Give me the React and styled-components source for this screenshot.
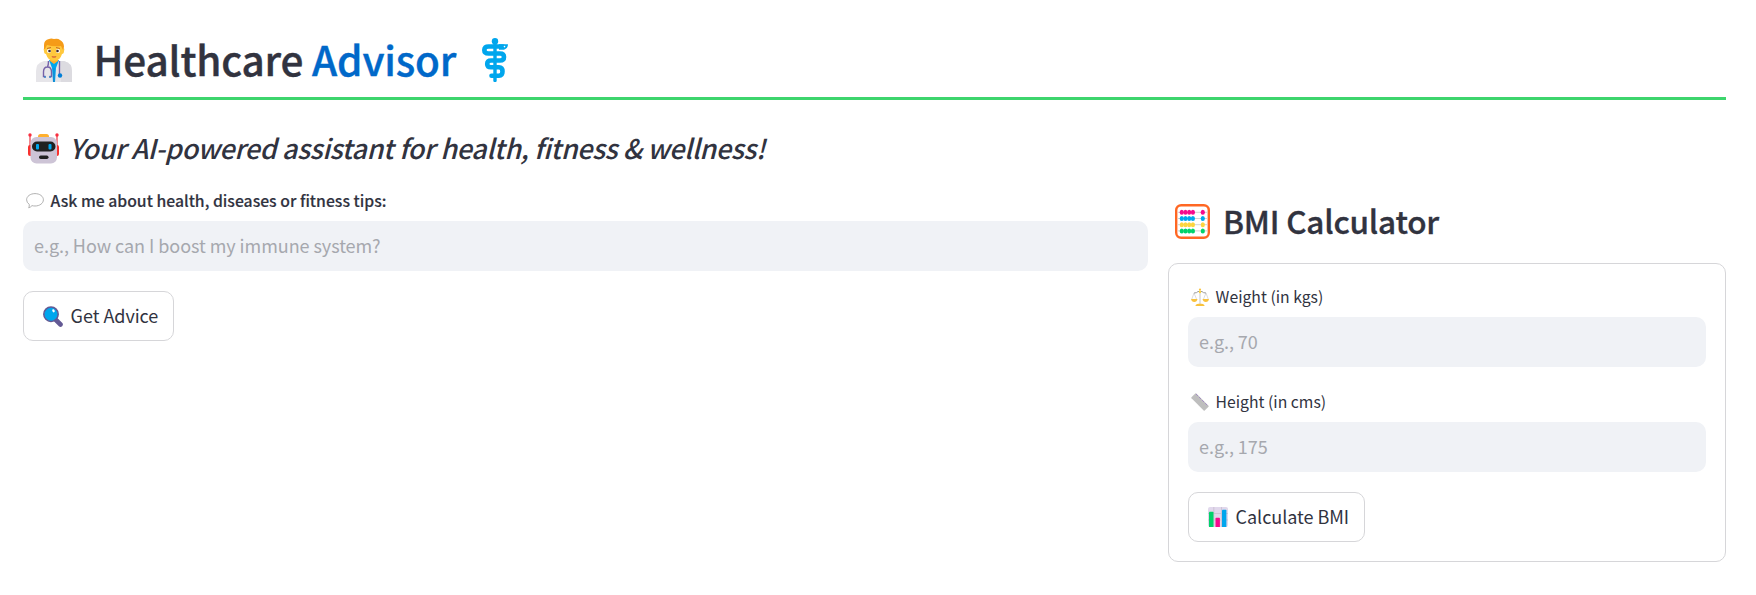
import React from "react";
import styled, { createGlobalStyle } from "styled-components";

const Global = createGlobalStyle`
  * { box-sizing: border-box; }
  body {
    margin: 0;
    background: #fff;
    color: #31333f;
    font-family: "Noto Sans CJK SC", "Noto Sans", sans-serif;
  }
  h1, h2, h4 { margin: 0; font-weight: 500; white-space: nowrap; }
  svg { display: block; flex: none; }
`;

const Page = styled.main`
  padding: 0 30px 33px 23px;
`;

const Header = styled.header`
  display: flex;
  align-items: center;
  height: 100px;
  padding: 33px 0 10px 13px;
  border-bottom: 3px solid #3dd56d;
`;

const Title = styled.h1`
  && { margin: 0 26px 2px 21.5px; }
  font-size: 40.5px;
  line-height: 54px;
  letter-spacing: -0.2px;
  -webkit-text-stroke: 0.4px currentColor;
`;

const Accent = styled.span`
  color: #0068c9;
`;

const Tagline = styled.div`
  display: flex;
  align-items: center;
  gap: 10px;
  height: 36px;
  margin-top: 30px;
  padding-left: 5px;
`;

const TaglineText = styled.h4`
  font-size: 27px;
  line-height: 36px;
  font-style: italic;
  letter-spacing: -0.375px;
`;

const Columns = styled.div`
  display: grid;
  grid-template-columns: 1125px 558px;
  gap: 20px;
  margin-top: 23px;
`;

const Column = styled.section`
  padding-top: ${(p) => p.$top || 0}px;
`;

const Field = styled.label`
  display: block;
  margin-bottom: 20px;
`;

const Label = styled.span`
  display: flex;
  align-items: center;
  gap: 6.6px;
  height: 24px;
  margin-bottom: 8px;
  padding-left: 3px;
  font-size: 15.75px;
  line-height: 24px;
  font-weight: ${(p) => (p.$strong ? 500 : 400)};
  -webkit-text-stroke: ${(p) => (p.$strong ? "0.15px" : "0")} currentColor;
`;

const Input = styled.input`
  display: block;
  width: 100%;
  height: 50px;
  padding: 0 11px 3px;
  border: 0;
  border-radius: 10px;
  background: #f0f2f6;
  color: inherit;
  font: 18px "Noto Sans CJK SC", "Noto Sans", sans-serif;
  letter-spacing: -0.05px;
  &::placeholder { color: #a6a8ae; opacity: 1; }
`;

const Button = styled.button`
  display: flex;
  align-items: center;
  gap: 7.6px;
  width: ${(p) => p.$width}px;
  height: 50px;
  padding: 0 0 0 19px;
  border: 1px solid #d6d6d9;
  border-radius: 10px;
  background: #fff;
  color: inherit;
  font: 18px "Noto Sans CJK SC", "Noto Sans", sans-serif;
  letter-spacing: -0.05px;
  white-space: nowrap;
`;

const ButtonText = styled.span`
  padding-bottom: 2px;
`;

const PanelHeading = styled.div`
  display: flex;
  align-items: center;
  gap: 13px;
  height: 42px;
  margin-bottom: 21px;
  padding-left: 7px;
`;

const PanelTitle = styled.h2`
  padding-bottom: 2px;
  font-size: 31.5px;
  line-height: 42px;
  letter-spacing: -0.2px;
  -webkit-text-stroke: 0.35px currentColor;
`;

const Card = styled.form`
  height: 299px;
  padding: 21px 19px 19px;
  border: 1px solid #d6d6d9;
  border-radius: 10px;
  ${Field} + ${Field} { padding-top: 3px; }
`;

const Doctor = () => (
  <svg width="36" height="44" viewBox="0 0 36 44">
    <path d="M0 44v-11q0-8 8-10h20q8 2 8 10v11z" fill="#e6e5e9" />
    <path d="M24 23h4q8 2 8 10v11H25z" fill="#dcdbe0" />
    <path d="M13 22h10l-3 8-1 14h-2l-1-14z" fill="#00a6ed" />
    <path d="M17.500 30h1v14h-1.500z" fill="#1588d0" />
    <path d="M14 18h8v5l-4 3-4-3z" fill="#ffb02e" />
    <path d="M9 10q-2 0-1 3 0 3 2 3 2 7 8 7t8-7q2 0 2-3 1-3-1-3V6H9z" fill="#ffc83d" />
    <path d="M8 11V7q0-5 5-6 2-1 5 0 4-1 6 1 4 2 4 7l-1 3-2-4q-7 1-14-1l-2 4z" fill="#f59b18" />
    <g fill="#fff"><circle cx="13" cy="13" r="2" /><circle cx="22" cy="13" r="2" /></g>
    <g fill="#402a32"><circle cx="13.500" cy="13" r="1.300" /><circle cx="21.500" cy="13" r="1.300" /></g>
    <path d="M11 10.500l4-1M20 9.500l4 1" stroke="#c26b29" />
    <path d="M15.500 18q2.500 1 5 0l-1 1.500h-3z" fill="#c73c35" />
    <path d="M12.500 23q0 4-1 6-4 0-4 5v4.500h2M11.500 29q4 0 4 5v4.500h-2M23.500 23v13" fill="none" stroke="#7562a8" strokeWidth="1.400" />
    <circle cx="24" cy="37.500" r="2.200" fill="#007fd7" />
    <path d="M8 39h2M13 39h2" stroke="#3c83c8" strokeWidth="1.500" />
  </svg>
);

const Medical = () => (
  <svg width="26" height="44" viewBox="0 0 26 44" fill="none" stroke="#00a6ed">
    <circle cx="13" cy="3.300" r="3.200" fill="#00a6ed" stroke="none" />
    <path d="M13 4v38.500" strokeWidth="3.400" strokeLinecap="round" />
    <path d="M21 8.500H6.500q-4.200 0-4.200 3.500t4.200 3.500h11.500q4 0 4 3.500T18 22.500H9q-3.800 0-3.800 3.400t3.800 3.400h8q3.500 0 3.500 4.200t-3.500 4.200H9.500" strokeWidth="4.600" strokeLinecap="round" strokeLinejoin="round" />
    <path d="M17 6.200h9q0 4-4 5.500h-5z" fill="#00a6ed" stroke="none" />
    <circle cx="22.500" cy="8.600" r=".8" fill="#fff" stroke="none" />
  </svg>
);

const Robot = () => (
  <svg width="31" height="31" viewBox="0 0 31 31">
    <path d="M2 3v12M29 3v12" stroke="#e43c48" strokeWidth="1.200" />
    <circle cx="2" cy="2" r="1.700" fill="#f92f40" /><circle cx="29" cy="2" r="1.700" fill="#f92f40" />
    <rect y="12" width="5" height="11" rx="2" fill="#f8312f" /><rect x="26" y="12" width="5" height="11" rx="2" fill="#f8312f" />
    <rect x="10" y="1" width="11" height="6" rx="2.500" fill="#ffb02e" />
    <rect x="2.500" y="4" width="26.500" height="26.500" rx="6" fill="#cdc4d6" />
    <rect x="4" y="8.500" width="23.500" height="10" rx="5" fill="#212121" />
    <rect x="8" y="11" width="3" height="5.500" rx="1" fill="#00a6ed" /><rect x="20.500" y="11" width="3" height="5.500" rx="1" fill="#00a6ed" />
    <rect x="11" y="22.500" width="9.500" height="3.500" rx="1.700" fill="#212121" />
  </svg>
);

const Bubble = () => (
  <svg width="18" height="16" viewBox="0 0 18 16">
    <path d="M9 .6c4.700 0 8.400 2.700 8.400 6.200S13.700 13 9 13q-1.600 0-3-.4-1.300 1.600-3.300 2.200.9-1.600.5-3.500Q.6 9.500.6 6.800C.6 3.300 4.300.6 9 .6z" fill="#fff" stroke="#a8a8a8" strokeWidth=".9" />
  </svg>
);

const Search = () => (
  <svg width="20" height="21" viewBox="0 0 20 21">
    <path d="M12.500 13.500l5 5" stroke="#635994" strokeWidth="4.600" strokeLinecap="round" />
    <circle cx="8" cy="8.200" r="7.200" fill="#00a6ed" stroke="#635994" strokeWidth="1.500" />
    <ellipse cx="10.500" cy="4.800" rx="1.200" ry="1.600" fill="#fff" transform="rotate(-25 10.500 4.800)" />
  </svg>
);

const beadColors = ["#f70a8d", "#00a6ed", "#fcd53f", "#00d26a"];
const Abacus = () => (
  <svg width="35" height="35" viewBox="0 0 35 35">
    <rect x="1.200" y="1.200" width="32.600" height="32.600" rx="5" fill="#fff" stroke="#ff6723" strokeWidth="2.400" />
    {beadColors.map((color, row) => (
      <g key={color} fill={color}>
        <path d={`M2.500 ${8.300 + row * 6.200}h30`} stroke="#d3d3d3" />
        {[6.800, 10.500, 14.200, 17.900, 27.800].map((x) => (
          <ellipse key={x} cx={x} cy={8.300 + row * 6.200} rx="2.100" ry="2.500" />
        ))}
      </g>
    ))}
  </svg>
);

const Scales = () => (
  <svg width="18" height="18" viewBox="0 0 18 18">
    <path d="M3 5L.8 11M3 5l2.500 6M15 5l-2.500 6M15 5l2.200 6" stroke="#d3d3d3" strokeWidth=".8" />
    <path d="M3 5q3 0 4-1.500h4Q12 5 15 5" fill="none" stroke="#9b9b9b" strokeWidth="1" />
    <path d="M9 3v13" stroke="#d3d3d3" strokeWidth="1.300" />
    <path d="M0 11h6.500q-.5 3-3.200 3T0 11zM11.500 11H18q-.5 3-3.200 3t-3.300-3zM4.500 18q0-2 3-2.200h3q3 .2 3 2.200z" fill="#f9c23c" />
    <circle cx="9" cy="1.700" r="1.100" fill="#f9c23c" /><circle cx="9" cy="4" r="1.200" fill="#fcd53f" />
  </svg>
);

const Ruler = () => (
  <svg width="18" height="18" viewBox="0 0 18 18">
    <path d="M.5 4.300L4.300.5q.5-.5 1 0l12.200 12.200q.5.5 0 1l-3.800 3.800q-.5.5-1 0L.5 5.300q-.5-.5 0-1z" fill="#bebebe" />
    <path d="M5 1l12 12" stroke="#8d65c5" strokeWidth="1" strokeDasharray=".8 1.300" />
  </svg>
);

const Chart = () => (
  <svg width="20" height="20" viewBox="0 0 20 20">
    <rect width="20" height="20" rx="2" fill="#e1d8ec" />
    <path d="M0 6.500h20M0 13h20M5.800 0v20M13.500 0v20" stroke="#cdc4d6" />
    <path d="M1 20V5.500q0-.7.700-.7h3.100q.7 0 .7.700V20z" fill="#00d26a" />
    <path d="M7.500 20v-8.500q0-.7.700-.7h3q.7 0 .7.700V20z" fill="#f70a8d" />
    <path d="M14 20V3.500q0-.7.700-.7h3q.7 0 .7.700V20z" fill="#00a6ed" />
  </svg>
);

export default function App() {
  return (
    <Page>
      <Global />
      <Header>
        <Doctor />
        <Title>Healthcare <Accent>Advisor</Accent></Title>
        <Medical />
      </Header>
      <Tagline>
        <Robot />
        <TaglineText>Your AI-powered assistant for health, fitness &amp; wellness!</TaglineText>
      </Tagline>
      <Columns>
        <Column>
          <Field>
            <Label $strong><Bubble />Ask me about health, diseases or fitness tips:</Label>
            <Input placeholder="e.g., How can I boost my immune system?" />
          </Field>
          <Button type="button" $width={151}><Search /><ButtonText>Get Advice</ButtonText></Button>
        </Column>
        <Column $top={11}>
          <PanelHeading>
            <Abacus />
            <PanelTitle>BMI Calculator</PanelTitle>
          </PanelHeading>
          <Card>
            <Field>
              <Label><Scales />Weight (in kgs)</Label>
              <Input placeholder="e.g., 70" />
            </Field>
            <Field>
              <Label><Ruler />Height (in cms)</Label>
              <Input placeholder="e.g., 175" />
            </Field>
            <Button type="button" $width={177}><Chart /><ButtonText>Calculate BMI</ButtonText></Button>
          </Card>
        </Column>
      </Columns>
    </Page>
  );
}
